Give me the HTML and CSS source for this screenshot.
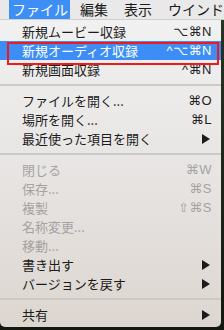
FILE: index.html
```html
<!DOCTYPE html>
<html lang="ja">
<head>
<meta charset="utf-8">
<title>ファイル</title>
<link rel="stylesheet" href="styles.css">
</head>
<body>
<div class="screen">
  <div class="menubar">
    <span class="mb-item active">ファイル</span>
    <span class="mb-item first">編集</span>
    <span class="mb-item">表示</span>
    <span class="mb-item">ウインドウ</span>
  </div>
  <div class="menu">
    <div class="item"><span class="label">新規ムービー収録</span><span class="key">⌥⌘N</span></div>
    <div class="item hl"><span class="label">新規オーディオ収録</span><span class="key">^⌥⌘N</span></div>
    <div class="item"><span class="label">新規画面収録</span><span class="key">^⌘N</span></div>
    <div class="sep"></div>
    <div class="item"><span class="label">ファイルを開く...</span><span class="key">⌘O</span></div>
    <div class="item"><span class="label">場所を開く...</span><span class="key">⌘L</span></div>
    <div class="item"><span class="label">最近使った項目を開く</span><svg class="arrow" viewBox="0 0 8 10" width="8" height="10"><path d="M0 0 L8 5 L0 10 Z"/></svg></div>
    <div class="sep"></div>
    <div class="item dis"><span class="label">閉じる</span><span class="key">⌘W</span></div>
    <div class="item dis"><span class="label">保存...</span><span class="key">⌘S</span></div>
    <div class="item dis"><span class="label">複製</span><span class="key">⇧⌘S</span></div>
    <div class="item dis"><span class="label">名称変更...</span></div>
    <div class="item dis"><span class="label">移動...</span></div>
    <div class="item"><span class="label">書き出す</span><svg class="arrow" viewBox="0 0 8 10" width="8" height="10"><path d="M0 0 L8 5 L0 10 Z"/></svg></div>
    <div class="item"><span class="label">バージョンを戻す</span><svg class="arrow" viewBox="0 0 8 10" width="8" height="10"><path d="M0 0 L8 5 L0 10 Z"/></svg></div>
    <div class="sep"></div>
    <div class="item"><span class="label">共有</span><svg class="arrow" viewBox="0 0 8 10" width="8" height="10"><path d="M0 0 L8 5 L0 10 Z"/></svg></div>
  </div>
  <div class="annot"></div>
</div>
</body>
</html>
```

FILE: styles.css
```css
html, body {
  margin: 0;
  padding: 0;
}
body {
  background: #1f2a1d;
  font-family: "Liberation Sans", "DejaVu Sans", "Noto Sans CJK JP", sans-serif;
  width: 224px;
  height: 330px;
  overflow: hidden;
}
.screen {
  position: relative;
  width: 224px;
  height: 330px;
  background: linear-gradient(#2b3526, #121810);
}
.menubar {
  display: flex;
  height: 19px;
  background: #e9e9e9;
  border-bottom: 1px solid #cfcfcf;
  padding-left: 9px;
  white-space: nowrap;
  overflow: hidden;
  font-size: 14px;
  font-family: "Noto Sans CJK JP", sans-serif;
  color: #1a1a1a;
}
.mb-item {
  padding: 0 8px;
  line-height: 19px;
  flex: none;
}
.mb-item.first {
  margin-left: 2px;
}
.mb-item.active {
  background: #3d8ef5;
  color: #fff;
  padding: 0 2px 0 3px;
}
.menu {
  width: 221px;
  padding: 2px 0 3px;
  background: linear-gradient(#f1f1f1 0%, #e9e7e6 40%, #ddd6d0 100%);
  border-radius: 0 0 5px 5px;
}
.item {
  display: flex;
  align-items: center;
  height: 19px;
  padding: 0 9px 0 22px;
  font-size: 13px;
  color: #1b1b1b;
}
.label {
  flex: 1;
  font-family: "Noto Sans CJK JP", sans-serif;
  white-space: nowrap;
}
.key {
  font-family: "Liberation Sans", "DejaVu Sans", sans-serif;
  font-size: 13px;
  letter-spacing: 0.5px;
  color: #222;
}
.arrow {
  fill: #1b1b1b;
  margin-right: 2px;
}
.item.hl {
  background: #3c8ef6;
  color: #fff;
}
.item.hl .key {
  color: #fff;
}
.item.dis,
.item.dis .key {
  color: #a5a3a2;
}
.sep {
  height: 12px;
  display: flex;
  align-items: center;
}
.sep::before {
  content: "";
  flex: 1;
  height: 2px;
  background: #cdc9c6;
}
.annot {
  position: absolute;
  left: 7px;
  top: 42px;
  width: 208px;
  height: 19px;
  border: 2px solid #f0191c;
}
```
